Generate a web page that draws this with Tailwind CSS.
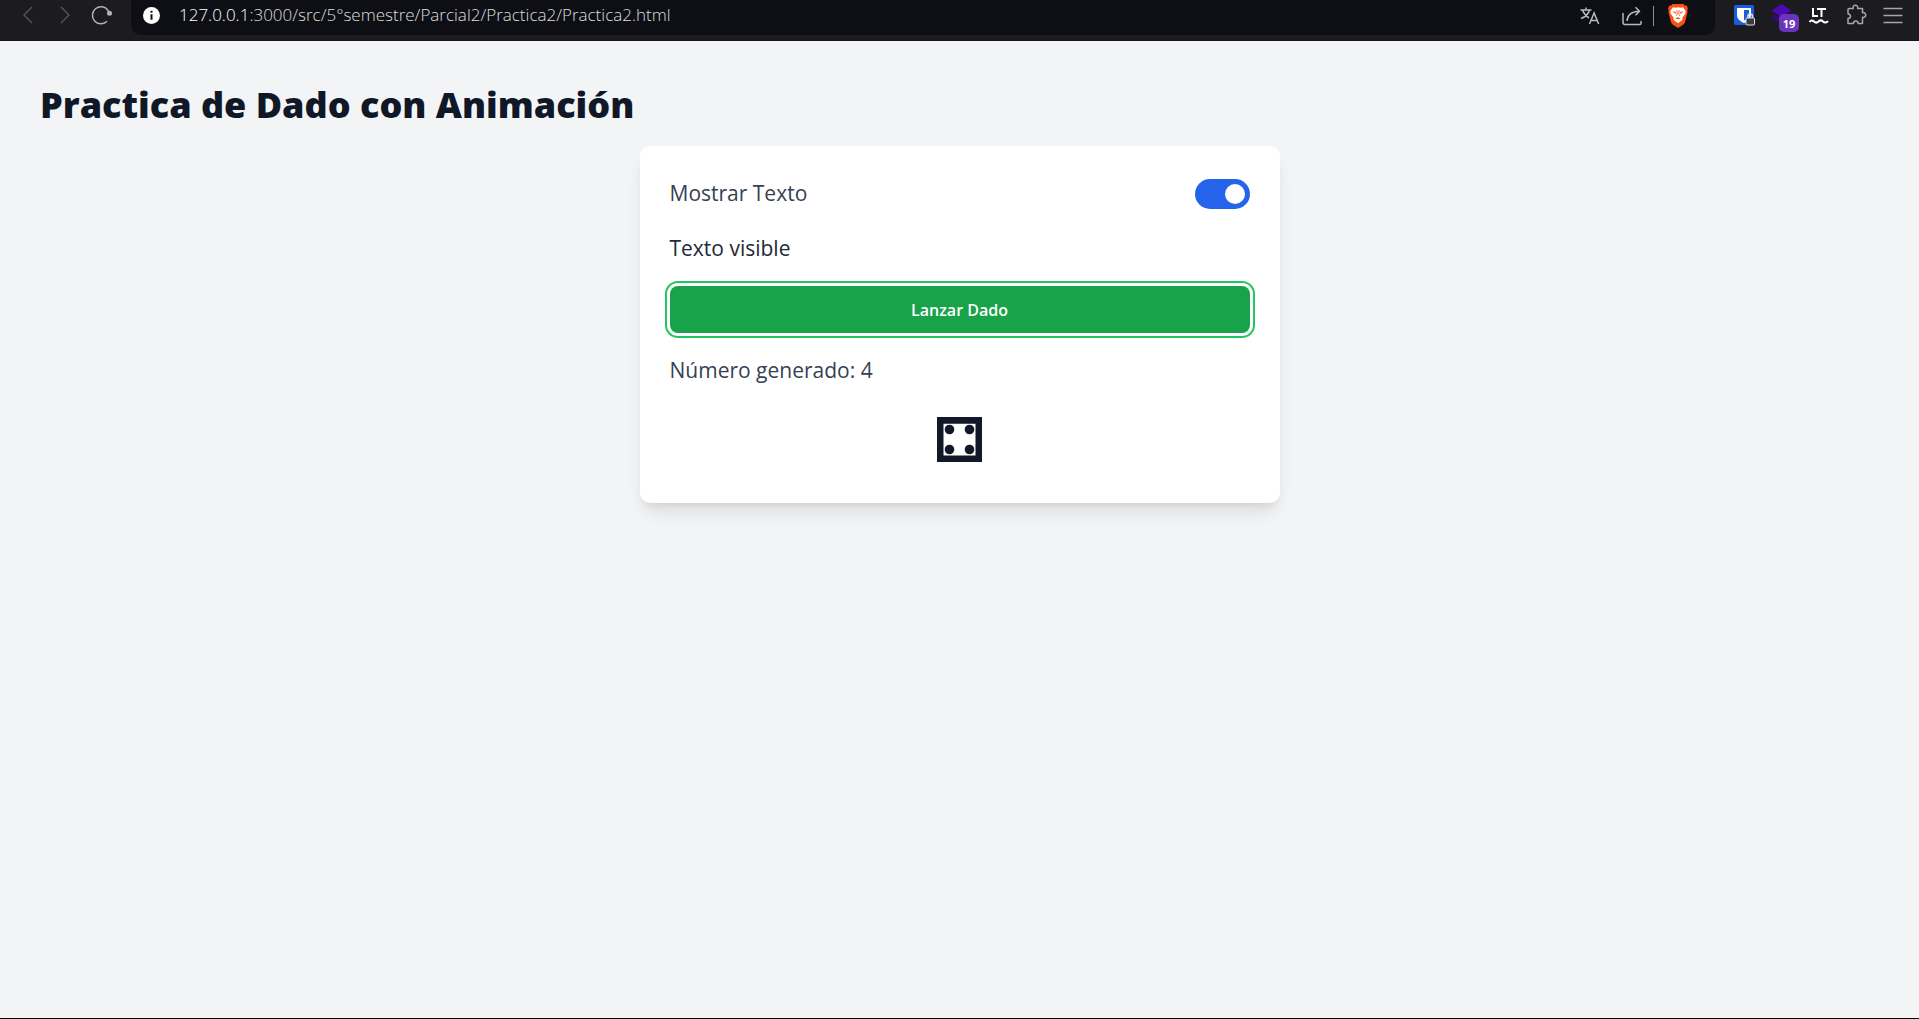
<!DOCTYPE html>
<html lang="es">
<head>
<meta charset="utf-8">
<meta name="viewport" content="width=device-width, initial-scale=1">
<title>Practica de Dado con Animación</title>
<script src="https://cdn.jsdelivr.net/npm/@tailwindcss/browser@4"></script>
</head>
<body class="flex min-h-screen flex-col border-b border-black bg-gray-100 font-['Open_Sans',sans-serif] text-gray-900">
  <header class="flex h-[41px] items-start border-b border-[#151418] bg-[#1c1b20] pr-4">
    <nav class="flex h-[30px] w-[131px] shrink-0 items-center pl-4" aria-label="Navegación">
      <button aria-label="Atrás" class="mr-3 text-[#55545a]">
        <svg class="size-6" viewBox="0 0 24 24" fill="none" stroke="currentColor" stroke-width="1.4"><path d="m16 4-8 8 8 8"/></svg>
      </button>
      <button aria-label="Adelante" class="mr-3 text-[#55545a]">
        <svg class="size-6" viewBox="0 0 24 24" fill="none" stroke="currentColor" stroke-width="1.4"><path d="m9 4 8 8-8 8"/></svg>
      </button>
      <button aria-label="Recargar" class="text-[#b4b4b8]">
        <svg class="size-6" viewBox="0 0 24 24" fill="none" stroke="currentColor" stroke-width="1.5"><path d="M19 18.200A8.500 8.500 0 1 1 20 7.500L21.300 10"/><circle cx="21.500" cy="10.200" r="2.500" fill="currentColor" stroke="none"/></svg>
      </button>
    </nav>
    <form class="flex h-[35px] min-w-0 flex-1 items-center rounded-b-[10px] bg-[#0e0f14] pr-[27px] pb-1 pl-3">
      <svg class="size-[17px] shrink-0" viewBox="0 0 17 17"><circle cx="8.500" cy="8.500" r="8.500" fill="#fff"/><path d="M7.500 3.800h2v2h-2zM7.500 7.200h2v5.600h-2z" fill="#0e0f14"/></svg>
      <a href="#" class="ml-[19px] min-w-0 flex-1 truncate pb-0.5 text-[17px] leading-[28px] font-light text-[#dededf]"><span class="text-white">127.0.0.1</span>:3000/src/5°semestre/Parcial2/Practica2/Practica2.html</a>
      <button type="button" aria-label="Traducir" class="text-[#b9babd]">
        <svg class="h-5 w-5" viewBox="0 0 20 20" fill="none" stroke="currentColor" stroke-width="1.500"><path d="M.5 4h11M6 1.500V4M2.500 4c1.500 4 4 6.500 6.500 8M9.500 4C8.500 8 5 11 1 12.500M9.500 18l4.600-11 4.600 11M11 14.500h6.200"/></svg>
      </button>
      <button type="button" aria-label="Compartir" class="ml-[22px] text-[#b9babd]">
        <svg class="h-5 w-5" viewBox="0 0 20 20" fill="none" stroke="currentColor" stroke-width="1.500" stroke-linejoin="round"><path d="M1 7v9.500a2 2 0 0 0 2 2h15a1 1 0 0 0 1-1V15M5 15c.3-6 4-9.300 12-9.800M13.500 1.200l4 4-4 4"/></svg>
      </button>
      <span class="ml-[11px] h-5 w-px bg-[#8e8f92]"></span>
      <button type="button" aria-label="Brave Shields" class="ml-3.5">
        <svg class="h-6 w-5" viewBox="0 0 20 24"><path d="M4.500 0h11L17 1.800l2-.2.800 3.400-.5 2 .2 1.500-2.700 10.200-1.700 2L10 24l-5.100-3.300-1.700-2L.5 8.500.700 7 .2 5 1 1.600l2 .2z" fill="#fb4f14"/><path d="m10 3.300 2.500.5L15 3.300 17.700 7l-.4 2.800-3.100 4.100.4 1.800L10 19.300l-4.600-3.600.4-1.800-3.100-4.100L2.300 7 5 3.300l2.500.5z" fill="#fff"/><path d="m4.500 7.300 3.400.8-.5 2zM15.500 7.300l-3.400.8.500 2zM7 14.500l3-1.300 3 1.300-3 .700z" fill="#fb4f14"/><path d="m8.800 6 .5 4-1.300 2M11.200 6l-.5 4 1.300 2" fill="none" stroke="#fb4f14" stroke-width=".8"/></svg>
      </button>
    </form>
    <div class="flex h-[30px] shrink-0 items-center gap-4 pl-[19px]">
      <button aria-label="Bitwarden">
        <svg class="h-[22px] w-[21px]" viewBox="0 0 21 22"><rect x="0" y="1" width="20" height="20" rx="1.500" fill="#175ddc"/><path d="M3 4h14v7c0 4-3.500 6.500-7 8-3.500-1.500-7-4-7-8z" fill="#fff"/><path d="M10 6h5v5c0 2.500-2 4.200-5 5.500z" fill="#175ddc"/><rect x="12" y="14" width="8.500" height="7" rx="1" fill="#3b3b3f" stroke="#ddd"/><path d="M13.800 14v-1.500a2.400 2.400 0 0 1 4.800 0V14" fill="none" stroke="#ddd" stroke-width="1.500"/></svg>
      </button>
      <button aria-label="Extensión, 19 avisos" class="relative h-[22px] w-[22px]">
        <svg class="size-[22px]" viewBox="0 0 22 22"><path d="m10.500 0 10 6.500-10 6.500-10-6.500z" fill="#4c0ab0"/><path d="m0 13 4-3 7 4.500 6-3.500v8l-6 1z" fill="#35077d"/></svg>
        <span class="absolute top-2.5 left-2 flex h-[18px] w-5 items-center justify-center rounded-[5px] bg-[#6a35bd] text-[11px] leading-none font-bold text-white">19</span>
      </button>
      <button aria-label="LanguageTool">
        <svg class="h-5 w-5" viewBox="0 0 20 20" fill="none" stroke="#fff" stroke-width="2"><path d="M4 3v8h5M8 4h9M12.500 4v8"/><path d="M.5 17c1.500-2 3-2 4.500-.5s3 1.500 4.500 0 3-1.500 4.500 0 3.500 1.500 5-.5"/></svg>
      </button>
      <button aria-label="Extensiones">
        <svg class="size-[22px]" viewBox="0 0 22 22" fill="none" stroke="#a6a6aa" stroke-width="1.500" stroke-linejoin="round"><path d="M4 4.500h4.200c-.5-2 .5-3.200 2.200-3.200s2.700 1.200 2.200 3.200h4.900v4.200c1.800-.4 3.200.6 3.200 2.300s-1.400 2.700-3.200 2.300v6.200h-4.300c-.1-1.700-1-2.500-2.400-2.500s-2.300.8-2.400 2.500H3v-5c1.700-.2 2.500-1 2.500-2.300S4.500 10.200 3 9.800V5.500a1 1 0 0 1 1-1z"/></svg>
      </button>
      <button aria-label="Menú">
        <svg class="h-5 w-5" viewBox="0 0 20 20" stroke="#a6a6aa" stroke-width="1.500"><path d="M.5 3.500h19M.5 10.500h19M.5 17.500h19"/></svg>
      </button>
    </div>
  </header>
  <main class="flex-1 p-10">
    <h1 class="mb-[18px] text-[36px] leading-[47px] font-extrabold">Practica de Dado con Animación</h1>
    <section class="mx-auto flex max-w-[640px] flex-col gap-5 rounded-[10px] bg-white p-[30px] text-[21px] leading-[35px] text-gray-700 shadow-[0_12px_18px_-4px_rgb(0_0_0/0.1),0_5px_8px_-5px_rgb(0_0_0/0.1)]">
      <div class="flex items-center justify-between">
        <label for="mostrar">Mostrar Texto</label>
        <input id="mostrar" type="checkbox" role="switch" checked class="h-[30px] w-[55px] appearance-none rounded-full bg-gray-300 p-[5px] before:block before:size-5 before:rounded-full before:bg-white checked:bg-[#2563eb] checked:before:ml-[25px]">
      </div>
      <p class="text-gray-800">Texto visible</p>
      <button class="h-[47px] rounded-[8px] bg-[#18a34a] pt-0.5 text-[16px] leading-[25px] font-semibold text-white ring-2 ring-[#22c55e] ring-offset-3 ring-offset-white">Lanzar Dado</button>
      <p>Número generado: 4</p>
      <div class="flex h-[65px] items-center justify-center pb-0.5">
        <svg class="size-[45px]" viewBox="0 0 45 45" role="img" aria-label="Dado: 4" fill="#111827"><path fill-rule="evenodd" d="M0 0h45v45H0zM6.500 6.800v31.700h32V6.800z"/><circle cx="12.500" cy="12.500" r="4.800"/><circle cx="32.500" cy="12.500" r="4.800"/><circle cx="12.500" cy="32.500" r="4.800"/><circle cx="32.500" cy="32.500" r="4.800"/></svg>
      </div>
    </section>
  </main>
</body>
</html>
